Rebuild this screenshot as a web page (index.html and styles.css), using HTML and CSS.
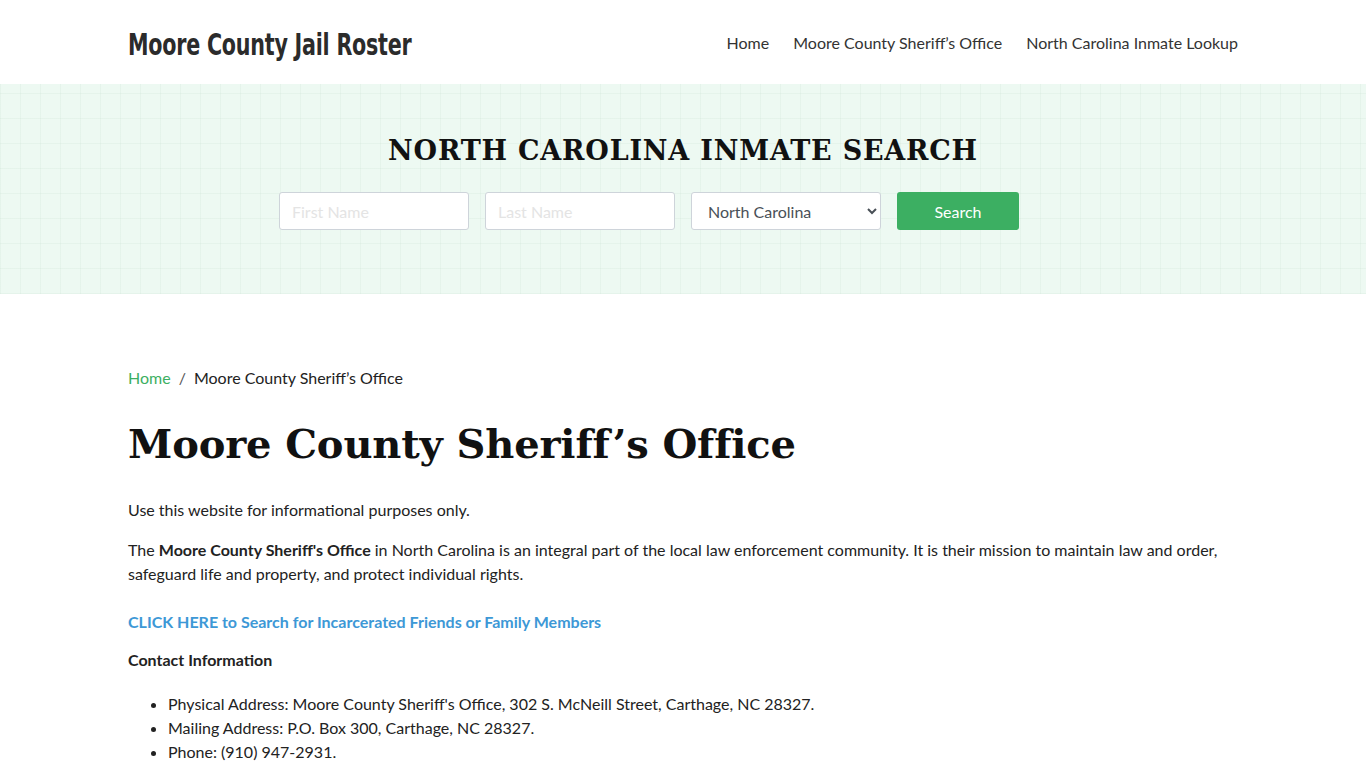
FILE: index.html
```html
<!DOCTYPE html>
<html lang="en">
<head>
<meta charset="utf-8">
<title>Moore County Sheriff's Office</title>
<link rel="stylesheet" href="styles.css">
</head>
<body>
<header class="site-header">
  <div class="container header-inner">
    <a class="brand" href="#">Moore County Jail Roster</a>
    <nav class="nav">
      <a href="#">Home</a>
      <a href="#">Moore County Sheriff’s Office</a>
      <a href="#">North Carolina Inmate Lookup</a>
    </nav>
  </div>
</header>
<section class="hero">
  <h2 class="hero-title">NORTH CAROLINA INMATE SEARCH</h2>
  <form class="search-form">
    <div class="col"><input class="field" type="text" placeholder="First Name"></div>
    <div class="col"><input class="field" type="text" placeholder="Last Name"></div>
    <div class="col"><select class="field select"><option>North Carolina</option></select></div>
    <div class="col"><button class="btn" type="button">Search</button></div>
  </form>
</section>
<main class="container content">
  <nav class="breadcrumb"><a href="#">Home</a><span class="sep">/</span><span>Moore County Sheriff’s Office</span></nav>
  <h1 class="page-title">Moore County Sheriff’s Office</h1>
  <p>Use this website for informational purposes only.</p>
  <p>The <strong>Moore County Sheriff's Office</strong> in North Carolina is an integral part of the local law enforcement community. It is their mission to maintain law and order, safeguard life and property, and protect individual rights.</p>
  <p class="cta"><a href="#">CLICK HERE to Search for Incarcerated Friends or Family Members</a></p>
  <p class="contact"><strong>Contact Information</strong></p>
  <ul class="list">
    <li>Physical Address: Moore County Sheriff's Office, 302 S. McNeill Street, Carthage, NC 28327.</li>
    <li>Mailing Address: P.O. Box 300, Carthage, NC 28327.</li>
    <li>Phone: (910) 947-2931.</li>
  </ul>
</main>
</body>
</html>
```
FILE: styles.css
```css
* { box-sizing: border-box; }
html, body { margin: 0; padding: 0; }
body {
  font-family: Lato, "Open Sans", sans-serif;
  font-size: 16px;
  line-height: 24px;
  color: #222;
  background: #fff;
}
a { text-decoration: none; }
.container {
  width: 1110px;
  margin: 0 auto;
}
.site-header { height: 84px; background: #fff; }
.header-inner {
  height: 84px;
  display: flex;
  align-items: center;
  justify-content: space-between;
}
.brand {
  display: inline-block;
  font-family: "DejaVu Sans Condensed", "DejaVu Sans", sans-serif;
  font-weight: bold;
  font-size: 31px;
  line-height: 36px;
  color: #2b2b2b;
  letter-spacing: -0.3px;
  margin-top: 3px;
  transform: scaleX(0.74);
  transform-origin: left center;
  white-space: nowrap;
}
.nav { display: flex; gap: 24px; margin-top: 2px; }
.nav a {
  font-size: 16px;
  color: #333;
}
.hero {
  height: 210px;
  background-color: #edf9f2;
  background-image:
    repeating-linear-gradient(90deg, rgba(180,210,190,0.14) 0 1px, transparent 1px 20px),
    repeating-linear-gradient(0deg, rgba(180,210,190,0.14) 0 1px, transparent 1px 25px);
  display: flex;
  flex-direction: column;
  align-items: center;
  padding-top: 51px;
}
.hero-title {
  margin: 0;
  font-family: "DejaVu Serif", serif;
  font-weight: bold;
  font-size: 27px;
  line-height: 32px;
  letter-spacing: 0.8px;
  color: #111;
}
.search-form {
  display: grid;
  grid-template-columns: repeat(4, 190px);
  gap: 16px;
  margin-top: 25px;
}
.field {
  width: 190px;
  height: 38px;
  border: 1px solid #ced4da;
  border-radius: 3px;
  background: #fff;
  font-family: Lato, sans-serif;
  font-size: 16px;
  padding: 0 12px;
  color: #495057;
}
.field::placeholder { color: #e4e4e4; }
.select { padding-left: 12px; }
.btn {
  width: 122px;
  height: 38px;
  border: none;
  border-radius: 3px;
  background: #3caf62;
  color: #fff;
  font-family: Lato, sans-serif;
  font-size: 16px;
}
.content { padding-top: 72px; padding-bottom: 40px; }
.breadcrumb { font-size: 16px; color: #222; line-height: 24px; }
.breadcrumb a { color: #3caf62; }
.breadcrumb .sep { padding: 0 8px; color: #555; }
.page-title {
  font-family: "DejaVu Serif", serif;
  font-weight: bold;
  font-size: 40px;
  line-height: 48px;
  letter-spacing: -0.15px;
  color: #111;
  margin: 30px 0 30px;
}
p { margin: 0 0 16px; }
.cta { margin-top: 24px; margin-bottom: 14px; }
.cta a { color: #3d98d6; font-weight: bold; }
.contact { margin-bottom: 20px; }
.list { margin: 0; padding-left: 40px; }
```
